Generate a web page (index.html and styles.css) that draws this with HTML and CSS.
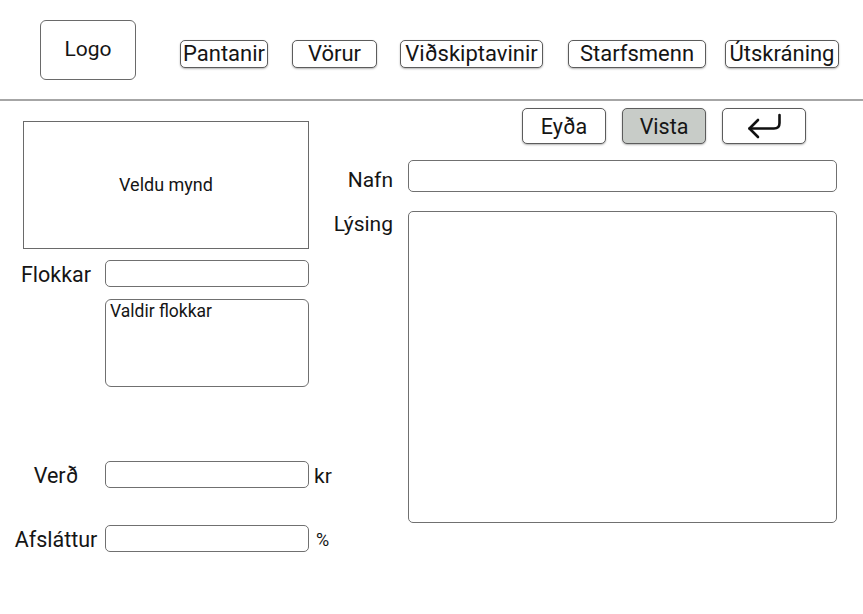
FILE: index.html
```html
<!DOCTYPE html>
<html lang="is">
<head>
<meta charset="utf-8">
<title>Vara</title>
<link rel="stylesheet" href="styles.css">
</head>
<body>
<header class="topbar">
  <div class="logo">Logo</div>
  <nav class="nav">
    <button class="btn nav-btn nav-orders">Pantanir</button>
    <button class="btn nav-btn nav-products">Vörur</button>
    <button class="btn nav-btn nav-customers">Viðskiptavinir</button>
    <button class="btn nav-btn nav-staff">Starfsmenn</button>
    <button class="btn nav-btn nav-logout">Útskráning</button>
  </nav>
</header>
<main class="editor">
  <section class="side">
    <div class="image-drop">Veldu mynd</div>
    <div class="field-row row-categories">
      <label class="side-label">Flokkar</label>
      <input class="field field-small" type="text">
    </div>
    <div class="field-row row-chosen">
      <span></span>
      <div class="chosen">Valdir flokkar</div>
    </div>
    <div class="field-row row-price">
      <label class="side-label">Verð</label>
      <input class="field field-small" type="text">
      <span class="unit">kr</span>
    </div>
    <div class="field-row row-discount">
      <label class="side-label">Afsláttur</label>
      <input class="field field-small" type="text">
      <span class="unit unit-pct">%</span>
    </div>
  </section>
  <section class="content">
    <div class="toolbar">
      <button class="btn tool-btn">Eyða</button>
      <button class="btn tool-btn tool-save">Vista</button>
      <button class="btn tool-btn tool-back" aria-label="Til baka">
        <svg class="back-icon" width="36" height="28" viewBox="0 0 36 28" fill="none" stroke="#111" stroke-width="2.6" stroke-linecap="round" stroke-linejoin="round">
          <path d="M33.5 3 V11 Q33.5 16.5 28 16.5 H3.5"/>
          <path d="M12 8 L3.5 16.5 L12 25"/>
        </svg>
      </button>
    </div>
    <div class="form-grid">
      <label class="main-label label-name">Nafn</label>
      <input class="field field-name" type="text">
      <label class="main-label label-desc">Lýsing</label>
      <textarea class="field field-desc"></textarea>
    </div>
  </section>
</main>
</body>
</html>
```
FILE: styles.css
```css
* {
  box-sizing: border-box;
}

body {
  margin: 0;
  background: #fff;
  color: #151515;
  font-family: Roboto, "Noto Sans", sans-serif;
}

.topbar {
  height: 101px;
  border-bottom: 2px solid #a6a6a6;
  display: flex;
  align-items: flex-start;
  padding: 20px 0 0 40px;
}

.logo {
  width: 96px;
  height: 60px;
  border: 1px solid #6a6a6a;
  border-radius: 6px;
  display: flex;
  align-items: center;
  justify-content: center;
  font-size: 21px;
  padding-bottom: 2px;
}

.nav {
  display: flex;
  margin-left: 44px;
  margin-top: 20px;
}

.btn {
  font-family: Roboto, "Noto Sans", sans-serif;
  font-size: 21.5px;
  color: #151515;
  background: #fff;
  border: 1px solid #5c5c5c;
  border-radius: 5px;
  box-shadow: 0 1px 2px rgba(0, 0, 0, 0.3);
  padding: 0;
  display: flex;
  align-items: center;
  justify-content: center;
}

.nav-btn {
  height: 28px;
  font-size: 22px;
  line-height: 24px;
}

.nav-orders { width: 88px; margin-right: 24px; }
.nav-products { width: 85px; margin-right: 23px; }
.nav-customers { width: 143px; margin-right: 25px; }
.nav-staff { width: 138px; margin-right: 19px; }
.nav-logout { width: 114px; }

.editor {
  display: grid;
  grid-template-columns: 320px 1fr;
  padding-right: 26px;
}

.side {
  padding: 20px 0 0 12px;
}

.image-drop {
  margin-left: 11px;
  width: 286px;
  height: 128px;
  border: 1px solid #6a6a6a;
  display: flex;
  align-items: center;
  justify-content: center;
  font-size: 18px;
  padding-bottom: 2px;
}

.field-row {
  display: grid;
  grid-template-columns: 88px 204px auto;
  column-gap: 5px;
  align-items: center;
}

.row-categories { margin-top: 11px; }
.row-chosen { margin-top: 12px; }
.row-price { margin-top: 74px; }
.row-discount { margin-top: 36px; }

.side-label {
  text-align: center;
  font-size: 21.5px;
  line-height: 24px;
  padding-top: 2px;
}

.row-discount .side-label {
  padding-top: 4px;
}

.field {
  display: block;
  margin: 0;
  border: 1px solid #707070;
  border-radius: 5px;
  background: #fff;
  font-family: inherit;
  padding: 0 6px;
  outline: none;
  resize: none;
}

.field-small {
  width: 204px;
  height: 27px;
}

.chosen {
  height: 88px;
  border: 1px solid #707070;
  border-radius: 6px;
  font-size: 17.5px;
  padding: 1px 4px;
  line-height: 20px;
}

.unit {
  font-size: 21px;
  line-height: 24px;
  padding-top: 2px;
}

.unit-pct {
  font-size: 18px;
  padding-left: 2px;
  padding-top: 3px;
}

.content {
  padding-top: 7px;
}

.toolbar {
  display: flex;
  justify-content: flex-end;
  gap: 16px;
  margin-right: 31px;
}

.tool-btn {
  width: 84px;
  height: 36px;
}

.tool-save {
  background: #c8ccc8;
}

.back-icon {
  display: block;
  margin-top: -1px;
}

.form-grid {
  margin-top: 16px;
  display: grid;
  grid-template-columns: 74px 1fr;
  column-gap: 14px;
  row-gap: 19px;
  align-items: start;
}

.main-label {
  text-align: right;
  font-size: 21px;
  line-height: 24px;
  padding-right: 1px;
}

.label-name {
  padding-top: 8px;
}

.label-desc {
  padding-top: 1px;
}

.field-name {
  width: 100%;
  height: 32px;
}

.field-desc {
  width: 100%;
  height: 312px;
}
```
